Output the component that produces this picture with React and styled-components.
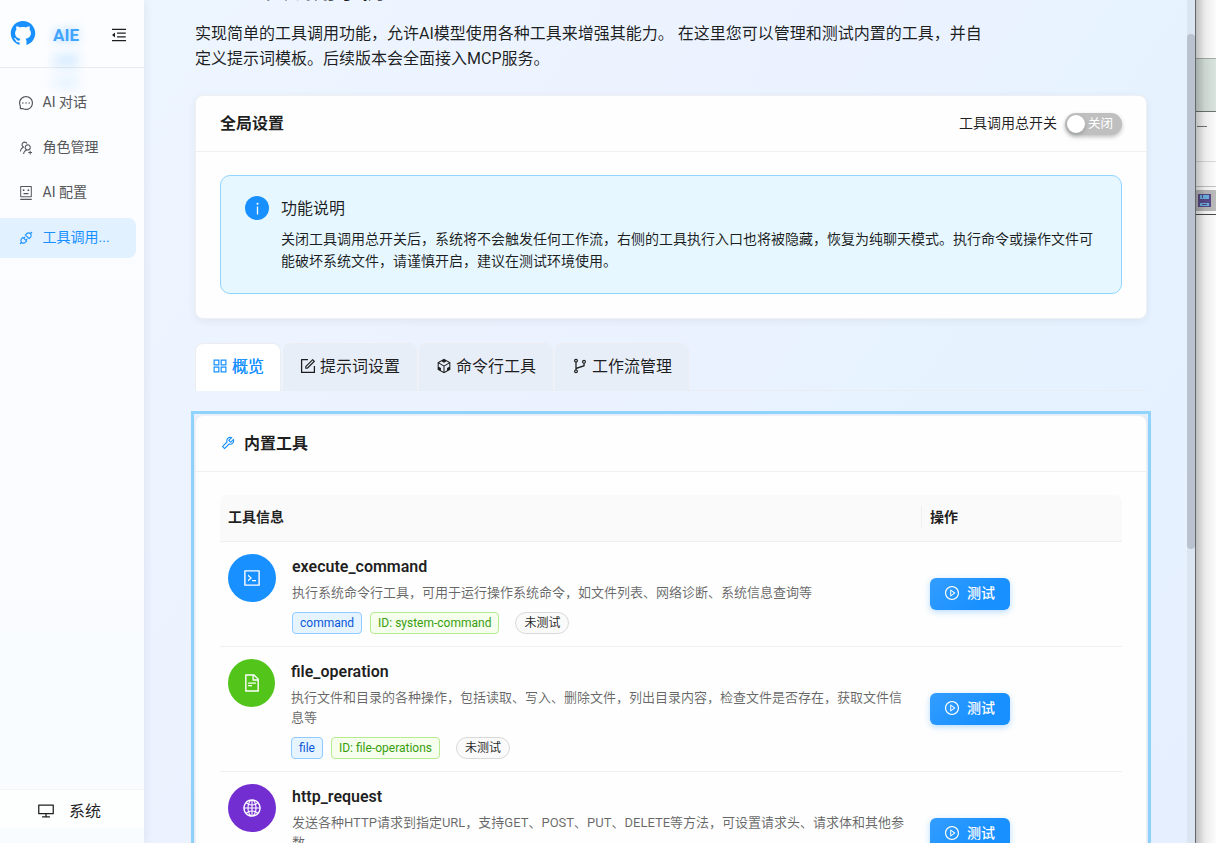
import React from 'react';
import styled, { createGlobalStyle, css } from 'styled-components';
import {
  AiFillGithub, AiOutlineMenuFold, AiOutlineMessage, AiOutlineUsergroupAdd, AiOutlineRobot,
  AiOutlineApi, AiOutlineAppstore, AiOutlineForm, AiOutlineCodeSandbox, AiOutlineBranches,
  AiOutlineTool, AiOutlineCode, AiOutlineFileText, AiOutlineGlobal, AiOutlinePlayCircle,
  AiOutlineDesktop, AiOutlineInfo,
} from 'react-icons/ai';

const Global = createGlobalStyle`
  * { box-sizing: border-box; }
  body {
    margin: 0;
    overflow: hidden;
    font-family: Roboto, "Noto Sans CJK SC", sans-serif;
    font-size: 14px;
    color: rgba(0, 0, 0, 0.88);
  }
  svg { display: block; flex: none; }
  h1, h2, h3, h4, p { margin: 0; }
`;

const Screen = styled.div`
  display: flex;
  width: 1216px;
  height: 843px;
  overflow: hidden;
`;

/* Text beside an icon, lifted to sit on the icon's optical centre */
const Label = styled.span`
  padding-bottom: ${(p) => p.$lift || 2}px;
`;

/* Sidebar */
const Sider = styled.aside`
  display: flex;
  flex-direction: column;
  width: 144px;
  background: linear-gradient(180deg, #fbfdff 0%, #fbfcff 35%, #f8fcff 100%);
  box-shadow: 2px 0 8px rgba(0, 21, 41, 0.06);
  z-index: 1;
`;
const Brand = styled.div`
  display: flex;
  align-items: center;
  height: 68px;
  padding: 2px 16px 0 9px;
  border-bottom: 1px solid #e8ecf0;
`;
const Logo = styled(AiFillGithub)`
  color: #1890ff;
  margin-bottom: 3px;
`;
const BrandName = styled.span`
  flex: 1;
  margin-left: 16px;
  font-size: 17px;
  font-weight: 700;
  line-height: 24px;
  color: #40a4ff;
  text-shadow: 0 0 10px rgba(24, 144, 255, 0.4), 0 25px 11px rgba(24, 144, 255, 0.3), 0 47px 13px rgba(24, 144, 255, 0.2);
`;
const Menu = styled.nav`
  display: flex;
  flex-direction: column;
  gap: 5px;
  padding-top: 15px;
  flex: 1;
`;
const MenuItem = styled.div`
  display: flex;
  align-items: center;
  gap: 8.5px;
  width: 136px;
  height: 40px;
  padding: 0 0 3px 18px;
  border-radius: 0 8px 8px 0;
  color: ${(p) => (p.$active ? '#1890ff' : '#555759')};
  background: ${(p) => (p.$active ? '#e1f1ff' : 'transparent')};
  svg { margin-top: 2px; }
`;
const SiderFoot = styled.div`
  display: flex;
  align-items: center;
  gap: 14px;
  height: 39px;
  margin-bottom: 15px;
  padding: 3px 0 0 37px;
  border-top: 1px solid #f2f5f8;
  background: #fdfefe;
  font-size: 16px;
`;

/* Main area */
const Main = styled.main`
  flex: 1;
  height: 843px;
  overflow: hidden;
  padding: 0 40px 0 51px;
  background: linear-gradient(125deg, #edf5ff 0%, #ebf2ff 50%, #e6f3ff 64%, #e6efff 100%);
`;
const TitleClip = styled.div`
  display: flex;
  align-items: flex-end;
  height: 6px;
`;
const PageTitle = styled.h1`
  display: flex;
  align-items: center;
  gap: 22px;
  height: 32px;
  font-size: 24px;
  font-weight: 600;
  line-height: 32px;
  white-space: nowrap;
  svg { color: #69b9ff; }
`;
const Intro = styled.p`
  width: 800px;
  margin-top: 15px;
  font-size: 16px;
  line-height: 25px;
`;
const Card = styled.section`
  width: 952px;
  border: 1px solid #eef0f3;
  border-radius: 8px;
  background: #fefefe;
  box-shadow: 0 2px 8px rgba(0, 0, 0, 0.06);
`;
const SettingsCard = styled(Card)`
  margin-top: 24px;
`;
const ToolsCard = styled(Card)`
  height: 520px;
`;
const FocusFrame = styled.div`
  width: 960px;
  margin: 20px -4px 0;
  padding: 1px;
  border: 3px solid #91d5ff;
`;
const CardHead = styled.header`
  display: flex;
  align-items: center;
  gap: 8px;
  height: 56px;
  padding: 0 24px;
  border-bottom: 1px solid #f0f0f0;
  svg { color: #1890ff; margin-bottom: 2px; }
`;
const CardTitle = styled.h2`
  flex: 1;
  padding-bottom: 4px;
  font-size: 16px;
  font-weight: 600;
`;
const Switch = styled.div`
  display: flex;
  align-items: center;
  gap: 3px;
  width: 57px;
  height: 22px;
  padding: 0 2px;
  border-radius: 11px;
  background: #bfbfbf;
  box-shadow: 0 2px 4px rgba(0, 0, 0, 0.25);
  color: #fff;
  font-size: 12.5px;
`;
const Knob = styled.span`
  width: 18px;
  height: 18px;
  border-radius: 50%;
  background: #fff;
  box-shadow: 0 2px 4px rgba(0, 35, 11, 0.2);
`;
const CardBody = styled.div`
  padding: 23px 24px 24px;
`;
const Notice = styled.div`
  display: flex;
  gap: 12px;
  height: 119px;
  padding: 20px 24px;
  border: 1px solid #91d5ff;
  border-radius: 10px;
  background: #e6f7ff;
`;
const InfoBadge = styled.span`
  display: flex;
  align-items: center;
  justify-content: center;
  flex: none;
  width: 24px;
  height: 24px;
  border-radius: 50%;
  background: #1890ff;
  color: #fff;
`;
const NoticeTitle = styled.h4`
  margin-bottom: 7px;
  font-size: 16px;
  font-weight: 400;
  line-height: 25px;
`;
const NoticeText = styled.p`
  width: 816px;
  line-height: 22px;
`;
const Tabs = styled.div`
  display: flex;
  gap: 2px;
  width: 952px;
  margin-top: 24px;
  border-bottom: 1px solid #e9edf3;
`;
const Tab = styled.div`
  display: flex;
  align-items: center;
  gap: 3px;
  height: 48px;
  padding: 0 16px 3px 15px;
  margin-bottom: -1px;
  border: 1px solid #ebedf1;
  border-bottom: 0;
  border-radius: 8px 8px 0 0;
  font-size: 16px;
  background: ${(p) => (p.$active ? '#fff' : '#e8eef8')};
  color: ${(p) => (p.$active ? '#1890ff' : 'inherit')};
  ${(p) => p.$active && 'text-shadow: 0 0 0.25px currentcolor;'}
`;

/* Tool table */
const Table = styled.div`
  width: 902px;
`;
const Row = styled.div`
  display: grid;
  grid-template-columns: 701px 201px;
  border-bottom: 1px solid #f0f0f0;
`;
const HeadRow = styled(Row)`
  align-items: center;
  height: 47px;
  padding-bottom: 1px;
  border-radius: 8px 8px 0 0;
  background: #fafafa;
  font-weight: 600;
`;
const HeadCell = styled.div`
  height: 23px;
  line-height: 22px;
  padding-left: 8px;
  & + & { border-left: 1px solid #f0f0f0; }
`;
const Info = styled.div`
  display: flex;
  gap: 16px;
  padding: 12px 8px;
`;
const Avatar = styled.div`
  display: flex;
  align-items: center;
  justify-content: center;
  width: ${(p) => p.$width}px;
  height: 48px;
  flex: none;
  border-radius: 50%;
  background: ${(p) => p.$color};
  color: #fff;
`;
const ToolName = styled.h3`
  margin-bottom: 4px;
  font-size: 16px;
  font-weight: 600;
  line-height: 25px;
`;
const ToolText = styled.p`
  width: 613px;
  margin-bottom: 8px;
  font-size: 13px;
  line-height: 20.5px;
  color: rgba(0, 0, 0, 0.6);
`;
const Tags = styled.div`
  display: flex;
  gap: 8px;
`;
const tones = {
  blue: css`color: #0958d9; background: #e6f4ff; border-color: #91caff;`,
  green: css`color: #389e0d; background: #f6ffed; border-color: #b7eb8f;`,
  plain: css`border-color: #d9d9d9; background: #fafafa; border-radius: 11px; margin-left: 8px; padding: 0 8px;`,
};
const Tag = styled.span`
  height: 22px;
  padding: 0 7px;
  border: 1px solid;
  border-radius: 4px;
  font-size: 12px;
  line-height: 20px;
  ${(p) => tones[p.$tone]}
`;
const ActionCell = styled.div`
  display: flex;
  align-items: center;
  padding-left: 9px;
`;
const TestButton = styled.button`
  display: flex;
  align-items: center;
  gap: 7px;
  width: 80px;
  height: 32px;
  padding: 0 0 1px 14px;
  border: 0;
  border-radius: 6px;
  background: linear-gradient(135deg, #339dff, #1890ff 70%);
  box-shadow: 0 2px 6px rgba(24, 144, 255, 0.3);
  color: #fff;
  font: inherit;
  font-weight: 500;
`;

/* Scrollbar and the window behind */
const ScrollTrack = styled.div`
  width: 8px;
  height: 843px;
  padding-top: 34px;
  background: #dbe5f2;
`;
const ScrollThumb = styled.div`
  height: 515px;
  border-radius: 4px;
  background: #bac2cf;
`;
const Behind = styled.div`
  position: relative;
  display: flex;
  flex-direction: column;
  width: 21px;
  border-left: 1px solid #65696e;
  background: #fff;
  &::after {
    content: '';
    position: absolute;
    inset: 0;
    background: linear-gradient(90deg, rgba(0, 0, 0, 0.25), rgba(0, 0, 0, 0.08) 45%, rgba(0, 0, 0, 0.01));
  }
`;
const Band = styled.div`
  height: ${(p) => p.$height}px;
  background: ${(p) => p.$color || '#fff'};
  border-bottom: ${(p) => (p.$line ? `1px solid ${p.$line}` : '0')};
`;
const Dash = styled.div`
  width: 10px;
  height: 1px;
  margin: 14px 0 0 1px;
  background: #777;
`;
const SaveBand = styled(Band)`
  padding: 4px 0 0 2px;
`;

const menu = [
  { icon: AiOutlineMessage, label: 'AI 对话' },
  { icon: AiOutlineUsergroupAdd, label: '角色管理' },
  { icon: AiOutlineRobot, label: 'AI 配置' },
  { icon: AiOutlineApi, label: '工具调用...', active: true },
];
const tabs = [
  { icon: AiOutlineAppstore, label: '概览', active: true },
  { icon: AiOutlineForm, label: '提示词设置' },
  { icon: AiOutlineCodeSandbox, label: '命令行工具' },
  { icon: AiOutlineBranches, label: '工作流管理' },
];
const tools = [
  {
    icon: AiOutlineCode, color: '#1890ff', width: 48, name: 'execute_command', type: 'command', id: 'system-command',
    text: '执行系统命令行工具，可用于运行操作系统命令，如文件列表、网络诊断、系统信息查询等',
  },
  {
    icon: AiOutlineFileText, color: '#52c41a', width: 47, name: 'file_operation', type: 'file', id: 'file-operations',
    text: '执行文件和目录的各种操作，包括读取、写入、删除文件，列出目录内容，检查文件是否存在，获取文件信息等',
  },
  {
    icon: AiOutlineGlobal, color: '#722ed1', width: 48, name: 'http_request', type: 'http', id: 'http-request',
    text: '发送各种HTTP请求到指定URL，支持GET、POST、PUT、DELETE等方法，可设置请求头、请求体和其他参数',
  },
];

export default function App() {
  return (
    <Screen>
      <Global />
      <Sider>
        <Brand>
          <Logo size={28} />
          <BrandName>AIE</BrandName>
          <AiOutlineMenuFold size={18} />
        </Brand>
        <Menu>
          {menu.map(({ icon: Icon, label, active }) => (
            <MenuItem key={label} $active={active}><Icon size={16} /><Label>{label}</Label></MenuItem>
          ))}
        </Menu>
        <SiderFoot><AiOutlineDesktop size={18} /><Label>系统</Label></SiderFoot>
      </Sider>

      <Main>
        <TitleClip><PageTitle><AiOutlineApi size={24} />工具调用示例</PageTitle></TitleClip>
        <Intro>
          实现简单的工具调用功能，允许AI模型使用各种工具来增强其能力。 在这里您可以管理和测试内置的工具，并自定义提示词模板。后续版本会全面接入MCP服务。
        </Intro>
        <SettingsCard>
          <CardHead>
            <CardTitle>全局设置</CardTitle>
            <Label $lift={4}>工具调用总开关</Label>
            <Switch><Knob /><Label>关闭</Label></Switch>
          </CardHead>
          <CardBody>
            <Notice>
              <InfoBadge><AiOutlineInfo size={17} /></InfoBadge>
              <div>
                <NoticeTitle>功能说明</NoticeTitle>
                <NoticeText>
                  关闭工具调用总开关后，系统将不会触发任何工作流，右侧的工具执行入口也将被隐藏，恢复为纯聊天模式。执行命令或操作文件可能破坏系统文件，请谨慎开启，建议在测试环境使用。
                </NoticeText>
              </div>
            </Notice>
          </CardBody>
        </SettingsCard>
        <Tabs>
          {tabs.map(({ icon: Icon, label, active }) => (
            <Tab key={label} $active={active}><Icon size={18} /><Label>{label}</Label></Tab>
          ))}
        </Tabs>
        <FocusFrame>
          <ToolsCard>
            <CardHead><AiOutlineTool size={16} /><CardTitle>内置工具</CardTitle></CardHead>
            <CardBody>
              <Table>
                <HeadRow><HeadCell>工具信息</HeadCell><HeadCell>操作</HeadCell></HeadRow>
                {tools.map(({ icon: Icon, ...t }) => (
                  <Row key={t.name}>
                    <Info>
                      <Avatar $color={t.color} $width={t.width}><Icon size={20} /></Avatar>
                      <div>
                        <ToolName>{t.name}</ToolName>
                        <ToolText>{t.text}</ToolText>
                        <Tags>
                          <Tag $tone="blue">{t.type}</Tag>
                          <Tag $tone="green">ID: {t.id}</Tag>
                          <Tag $tone="plain">未测试</Tag>
                        </Tags>
                      </div>
                    </Info>
                    <ActionCell>
                      <TestButton><AiOutlinePlayCircle size={16} /><Label>测试</Label></TestButton>
                    </ActionCell>
                  </Row>
                ))}
              </Table>
            </CardBody>
          </ToolsCard>
        </FocusFrame>
      </Main>

      <ScrollTrack><ScrollThumb /></ScrollTrack>
      <Behind>
        <Band $height={59} $line="#a9b0ac" />
        <Band $height={53} $color="#dce7e1" $line="#6f7573" />
        <Band $height={50} $line="#dedede"><Dash /></Band>
        <Band $height={25} $line="#c4c4c4" />
        <Band $height={3} />
        <SaveBand $height={21} $color="#bdbdbd">
          <svg width="13" height="13" viewBox="0 0 13 13">
            <path fill="#5a4b8c" d="M0 0h13v13H0z" />
            <path fill="#6fb7e6" d="M2 1h9v4H2zM2 9h9v3H2z" />
            <path fill="#5a4b8c" d="M4 1h1v3H4zM4 10h5v1H4z" />
          </svg>
        </SaveBand>
        <Band $height={4} $line="#4a4a4a" />
      </Behind>
    </Screen>
  );
}
